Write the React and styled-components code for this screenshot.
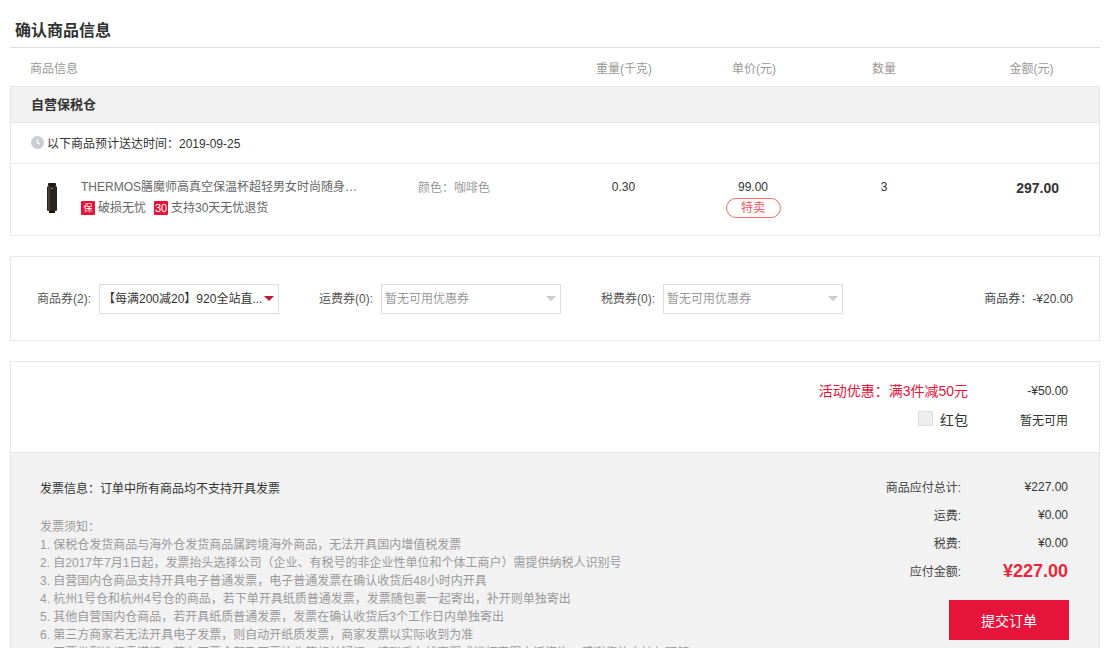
import React from 'react';
import styled, { createGlobalStyle } from 'styled-components';

const Global = createGlobalStyle`
  html, body { margin: 0; padding: 0; height: 100%; overflow: hidden; background: #fff; }
  body { font-family: "Liberation Sans", "Noto Sans CJK SC", Arial, sans-serif; font-size: 12px; color: #333; }
`;
const Page = styled.div`
  width: 1090px; height: 648px; padding: 0 10px; overflow: hidden; display: flex; flex-direction: column;
`;
const Title = styled.h2`
  margin: 0; height: 48px; box-sizing: border-box; padding: 20px 0 0 5px; font-size: 16px; line-height: 22px; font-weight: bold; color: #333;
  border-bottom: 1px solid #ddd; flex: none;
`;
const HeadRow = styled.div`
  display: grid; grid-template-columns: 550px 128px 132px 128px 152px; height: 38px; align-items: center; flex: none; color: #999; font-size: 12px;
  padding-top: 1px; box-sizing: border-box;
`;
const HeadCell = styled.div`
  text-align: ${p => p.$left ? 'left' : 'center'};
  padding-left: ${p => p.$left ? '20px' : p.$amount ? '15px' : '0'};
`;
const Card = styled.section`
  border: 1px solid #e6e6e6; flex: none;
`;
const Warehouse = styled.div`
  height: 33px; padding-bottom: 2px; background: #f2f2f2; border-bottom: 1px solid #e6e6e6; display: flex; align-items: center; padding-left: 20px;
  font-size: 13px; font-weight: bold; color: #333;
`;
const Delivery = styled.div`
  height: 39px; padding-bottom: 1px; border-bottom: 1px solid #e6e6e6; display: flex; align-items: center; padding-left: 20px; gap: 3px; color: #333;
`;
const ProductRow = styled.div`
  display: grid; grid-template-columns: 400px 149px 127px 132px 130px 150px; height: 71px;
`;
const ProductInfo = styled.div`
  display: flex; padding-left: 20px; padding-top: 12px;
`;
const Thumb = styled.div`
  width: 42px; height: 40px; margin: 2px 8px 0 0; display: flex; justify-content: center; align-items: center; flex: none;
`;
const ProductText = styled.div`
  width: 279px; padding-top: 4px;
`;
const ProductName = styled.div`
  color: #666; line-height: 14px; white-space: nowrap; overflow: hidden; text-overflow: ellipsis;
`;
const Badges = styled.div`
  display: flex; gap: 8px; margin-top: 7px; color: #666;
`;
const Badge = styled.span`
  display: flex; align-items: center; gap: 3px; line-height: 14px;
`;
const BadgeIcon = styled.i`
  width: 14px; height: 14px; background: #e6133a; color: #fff; font-style: normal; font-size: ${p => p.$mono ? '11px' : '9px'};
  display: flex; align-items: center; justify-content: center; border-radius: 1px;
`;
const Spec = styled.div`
  color: #999; padding: 17px 0 0 7px; line-height: 14px;
`;
const Cell = styled.div`
  text-align: center; padding-top: 16px; line-height: 14px; color: #333;
`;
const Tag = styled.div`
  width: 55px; height: 20px; box-sizing: border-box; border: 1px solid #f56a6a; border-radius: 10px; color: #f0555f; line-height: 18px; margin: 4px auto 0;
`;
const Total = styled.div`
  text-align: right; padding: 16px 40px 0 0; font-size: 14px; font-weight: bold; color: #333; line-height: 16px;
`;
const Coupons = styled(Card)`
  margin-top: 20px; height: 83px; display: flex; align-items: center; padding: 0 26px 0 26px;
`;
const CouponGroup = styled.div`
  display: flex; align-items: center; width: 282px; color: #555;
`;
const CouponLabel = styled.span`
  width: 62px; white-space: nowrap; flex: none; padding-bottom: 2px;
`;
const Select = styled.div`
  width: 180px; height: 30px; box-sizing: border-box; border: 1px solid #ddd; display: flex; align-items: center; justify-content: space-between; flex: none;
  padding: 0 4px 0 3px; color: ${p => p.$disabled ? '#999' : '#333'};
`;
const SelectText = styled.span`
  white-space: nowrap; padding-bottom: 2px;
`;
const Caret = styled.span`
  width: 0; height: 0; border-left: 5px solid transparent; border-right: 5px solid transparent;
  border-top: 5px solid ${p => p.$disabled ? '#ccc' : '#c8143c'}; flex: none;
`;
const CouponSum = styled.div`
  margin-left: auto; color: #444; padding-bottom: 3px;
`;
const Summary = styled(Card)`
  margin-top: 20px; flex: 1 0 auto; border-bottom: none;
`;
const Promo = styled.div`
  height: 76px; border-bottom: 1px solid #e6e6e6; padding: 14px 31px 0 0;
`;
const PromoRow = styled.div`
  display: flex; justify-content: flex-end; align-items: center; height: 29px; color: ${p => p.$red ? '#e6133a' : '#333'};
`;
const PromoLabel = styled.span`
  font-size: 14px; line-height: 18px;
`;
const PromoValue = styled.span`
  width: 100px; text-align: right; color: #333;
`;
const Check = styled.span`
  width: 13px; height: 13px; background: #eee; border: 1px solid #ddd; margin: 0 7px 2px 0;
`;
const Bottom = styled.div`
  background: #f2f2f2; height: 300px; display: flex; justify-content: space-between; padding: 26px 31px 0 29px;
`;
const Notes = styled.div`
  color: #333;
`;
const Invoice = styled.div`
  line-height: 20px;
`;
const Rules = styled.ol`
  list-style: none; margin: 19px 0 0; padding: 0; color: #999; line-height: 18px; white-space: nowrap;
`;
const Pay = styled.div`
  width: 260px; display: flex; flex-direction: column; align-items: flex-end;
`;
const PayRow = styled.div`
  display: grid; grid-template-columns: 1fr 107px; height: 28px; align-items: center; width: 100%; text-align: right; color: #444;
  margin-top: ${p => p.$first ? '-6px' : '0'};
`;
const PayLabel = styled.span`
  padding-bottom: 2px;
`;
const PayValue = styled.span`
  color: ${p => p.$strong ? '#e8273a' : '#333'}; font-size: ${p => p.$strong ? '18px' : '12px'}; font-weight: ${p => p.$strong ? 'bold' : 'normal'};
`;
const Submit = styled.button`
  width: 120px; height: 40px; border: 0; background: #e6133a; color: #fff; font: inherit; font-size: 14px; margin: 15px -1px 0 0; padding: 0;
`;

const rules = [
  '发票须知：',
  '1. 保税仓发货商品与海外仓发货商品属跨境海外商品，无法开具国内增值税发票',
  '2. 自2017年7月1日起，发票抬头选择公司（企业、有税号的非企业性单位和个体工商户）需提供纳税人识别号',
  '3. 自营国内仓商品支持开具电子普通发票，电子普通发票在确认收货后48小时内开具',
  '4. 杭州1号仓和杭州4号仓的商品，若下单开具纸质普通发票，发票随包裹一起寄出，补开则单独寄出',
  '5. 其他自营国内仓商品，若开具纸质普通发票，发票在确认收货后3个工作日内单独寄出',
  '6. 第三方商家若无法开具电子发票，则自动开纸质发票，商家发票以实际收到为准',
  '7. 开票类型选择需谨慎，若有开票金额及开票抬头等相关疑问，请联系在线客服或拨打客服电话咨询，感谢您的支持与理解',
];

const Clock = () => (
  <svg width="13" height="13" viewBox="0 0 13 13">
    <circle cx="6.5" cy="6.5" r="6.5" fill="#c9ccd0" />
    <path d="M6.5 3v3.8l2.4 1.4" fill="none" stroke="#fff" strokeWidth="1.2" />
  </svg>
);
const Bottle = () => (
  <svg width="10" height="30" viewBox="0 0 10 30">
    <rect x="1" y="0" width="8" height="3" rx="1" fill="#1c1a18" />
    <rect x="0" y="3" width="10" height="25" rx="1.5" fill="#2a2420" />
    <rect x="1" y="3" width="2" height="25" fill="#4a3d33" />
    <rect x="2" y="28" width="6" height="2" fill="#120f0d" />
    <rect x="4" y="5" width="2" height="1" fill="#b98a5a" />
  </svg>
);

export default function App() {
  return (
    <Page>
      <Global />
      <Title>确认商品信息</Title>
      <HeadRow>
        <HeadCell $left>商品信息</HeadCell>
        <HeadCell>重量(千克)</HeadCell>
        <HeadCell>单价(元)</HeadCell>
        <HeadCell>数量</HeadCell>
        <HeadCell $amount>金额(元)</HeadCell>
      </HeadRow>
      <Card>
        <Warehouse>自营保税仓</Warehouse>
        <Delivery><Clock />以下商品预计送达时间：2019-09-25</Delivery>
        <ProductRow>
          <ProductInfo>
            <Thumb><Bottle /></Thumb>
            <ProductText>
              <ProductName>THERMOS膳魔师高真空保温杯超轻男女时尚随身杯子水杯</ProductName>
              <Badges>
                <Badge><BadgeIcon>保</BadgeIcon>破损无忧</Badge>
                <Badge><BadgeIcon $mono>30</BadgeIcon>支持30天无忧退货</Badge>
              </Badges>
            </ProductText>
          </ProductInfo>
          <Spec>颜色：咖啡色</Spec>
          <Cell>0.30</Cell>
          <Cell>99.00<Tag>特卖</Tag></Cell>
          <Cell>3</Cell>
          <Total>297.00</Total>
        </ProductRow>
      </Card>
      <Coupons>
        <CouponGroup>
          <CouponLabel>商品券(2):</CouponLabel>
          <Select><SelectText>【每满200减20】920全站直...</SelectText><Caret /></Select>
        </CouponGroup>
        <CouponGroup>
          <CouponLabel>运费券(0):</CouponLabel>
          <Select $disabled><SelectText>暂无可用优惠券</SelectText><Caret $disabled /></Select>
        </CouponGroup>
        <CouponGroup>
          <CouponLabel>税费券(0):</CouponLabel>
          <Select $disabled><SelectText>暂无可用优惠券</SelectText><Caret $disabled /></Select>
        </CouponGroup>
        <CouponSum>商品券：-¥20.00</CouponSum>
      </Coupons>
      <Summary>
        <Promo>
          <PromoRow $red><PromoLabel>活动优惠：满3件减50元</PromoLabel><PromoValue>-¥50.00</PromoValue></PromoRow>
          <PromoRow><Check /><PromoLabel>红包</PromoLabel><PromoValue>暂无可用</PromoValue></PromoRow>
        </Promo>
        <Bottom>
          <Notes>
            <Invoice>发票信息：订单中所有商品均不支持开具发票</Invoice>
            <Rules>{rules.map(r => <li key={r}>{r}</li>)}</Rules>
          </Notes>
          <Pay>
            <PayRow $first><PayLabel>商品应付总计:</PayLabel><PayValue>¥227.00</PayValue></PayRow>
            <PayRow><PayLabel>运费:</PayLabel><PayValue>¥0.00</PayValue></PayRow>
            <PayRow><PayLabel>税费:</PayLabel><PayValue>¥0.00</PayValue></PayRow>
            <PayRow><PayLabel>应付金额:</PayLabel><PayValue $strong>¥227.00</PayValue></PayRow>
            <Submit>提交订单</Submit>
          </Pay>
        </Bottom>
      </Summary>
    </Page>
  );
}
